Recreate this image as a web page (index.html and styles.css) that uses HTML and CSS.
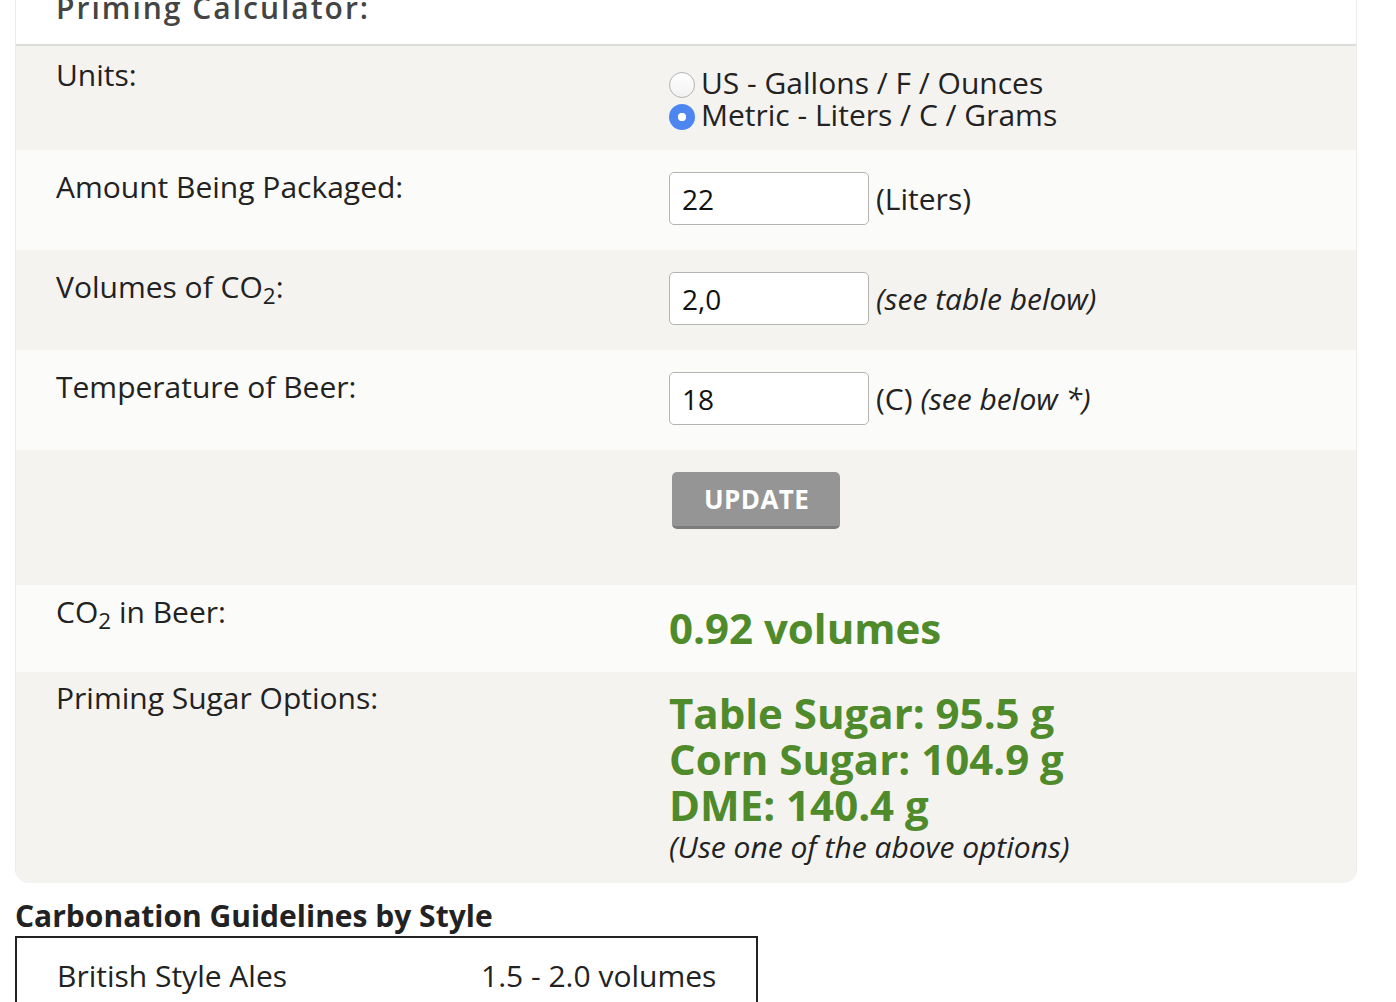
FILE: index.html
```html
<!DOCTYPE html>
<html lang="en">
<head>
    <meta charset="UTF-8">
    <meta name="viewport" content="width=device-width, initial-scale=1.0">
    <title>Priming Calculator</title>
    <link rel="stylesheet" href="styles.css">
</head>
<body>

    <div class="page">
        <div class="calc">
            <h2>Priming Calculator:</h2>

            <div class="row row-units">
                <div class="label">Units:</div>
                <div class="value">
                    <label class="radio"><input type="radio" name="units" value="us"> US - Gallons / F / Ounces</label>
                    <label class="radio"><input type="radio" name="units" value="metric" checked> Metric - Liters / C / Grams</label>
                </div>
            </div>

            <div class="row row-field alt">
                <div class="label">Amount Being Packaged:</div>
                <div class="value field">
                    <input type="text" id="amount" value="22">
                    <span>(Liters)</span>
                </div>
            </div>

            <div class="row row-field">
                <div class="label">Volumes of CO<sub>2</sub>:</div>
                <div class="value field">
                    <input type="text" id="volumes" value="2,0">
                    <span><em>(see table below)</em></span>
                </div>
            </div>

            <div class="row row-field alt">
                <div class="label">Temperature of Beer:</div>
                <div class="value field">
                    <input type="text" id="temp" value="18">
                    <span>(C) <em>(see below *)</em></span>
                </div>
            </div>

            <div class="row row-button">
                <div class="label"></div>
                <div class="value">
                    <button type="button">UPDATE</button>
                </div>
            </div>

            <div class="row row-result alt">
                <div class="label">CO<sub>2</sub> in Beer:</div>
                <div class="value result">0.92 volumes</div>
            </div>

            <div class="row row-sugar">
                <div class="label">Priming Sugar Options:</div>
                <div class="value">
                    <div class="result">Table Sugar: 95.5 g</div>
                    <div class="result">Corn Sugar: 104.9 g</div>
                    <div class="result">DME: 140.4 g</div>
                    <em class="note">(Use one of the above options)</em>
                </div>
            </div>
        </div>

        <h3>Carbonation Guidelines by Style</h3>
        <div class="guide">
            <div class="guide-row">
                <span>British Style Ales</span>
                <span>1.5 - 2.0 volumes</span>
            </div>
            <div class="guide-row">
                <span>Porter, Stout</span>
                <span>1.7 - 2.3 volumes</span>
            </div>
            <div class="guide-row">
                <span>Belgian Ales</span>
                <span>1.9 - 2.4 volumes</span>
            </div>
            <div class="guide-row">
                <span>American Ales and Lager</span>
                <span>2.2 - 2.7 volumes</span>
            </div>
        </div>
    </div>

</body>
</html>
```

FILE: styles.css
```css
body {
    margin: 0;
    font-family: "Open Sans", "Liberation Sans", sans-serif;
    font-size: 30px;
    line-height: 32px;
    color: #222;
    background-color: #fff;
}

.page {
    padding: 0 39px 0 15px;
}

.calc {
    margin-top: -24px;
    border-left: 1px solid #ececec;
    border-right: 1px solid #ececec;
    border-radius: 0 0 14px 14px;
    overflow: hidden;
}

h2 {
    margin: 0;
    padding: 12px 40px 16px;
    font-size: 30px;
    line-height: 40px;
    font-weight: 600;
    letter-spacing: 2px;
    color: #444;
    background-color: #fff;
    border-bottom: 2px solid #dcdcdc;
}

sub {
    font-size: 0.75em;
    line-height: 0;
    vertical-align: -0.25em;
}

.row {
    display: grid;
    grid-template-columns: 612px 1fr;
    padding: 0 40px 0 40px;
    background-color: #f4f3f0;
}

.row .value {
    margin-left: 1px;
}

.row.alt {
    background-color: #fbfbf9;
}

/* units */
.row-units {
    padding-top: 13px;
    padding-bottom: 19px;
}

.row-units .value {
    margin-top: 8px;
}

.radio {
    display: flex;
    align-items: center;
    gap: 6px;
    height: 32px;
}

.radio input {
    appearance: none;
    -webkit-appearance: none;
    width: 26px;
    height: 26px;
    margin: 4px 0 0;
    border: 1px solid #b3b3b3;
    border-radius: 50%;
    background: linear-gradient(#fff, #f2f2f2);
}

.radio input:checked {
    border: none;
    background: radial-gradient(circle, #fff 0 4px, #4d86f0 4.5px);
}

/* inputs */
.row-field {
    padding-top: 21px;
    padding-bottom: 25px;
}

.field {
    display: flex;
    align-items: center;
    gap: 7px;
    margin-top: 1px;
}

.field input {
    box-sizing: border-box;
    width: 200px;
    height: 53px;
    padding: 0 12px;
    font-family: inherit;
    font-size: 28px;
    color: #111;
    border: 1px solid #b4b4b4;
    border-radius: 5px;
    background-color: #fff;
}

/* update */
.row-button {
    padding-top: 22px;
    padding-bottom: 56px;
}

button {
    margin-left: 3px;
    padding: 12px 31px 12px 32px;
    font-family: inherit;
    font-size: 26px;
    line-height: 30px;
    font-weight: 700;
    letter-spacing: 0.4px;
    color: #fff;
    background-color: #959595;
    border: none;
    border-bottom: 3px solid #7c7c7c;
    border-radius: 5px;
    cursor: pointer;
}

button:hover {
    background-color: #888;
}

/* results */
.result {
    font-size: 42px;
    line-height: 46px;
    font-weight: 700;
    color: #4f8a2b;
}

.row-result {
    padding-top: 11px;
    padding-bottom: 21px;
}

.row-result .value {
    margin-top: 9px;
}

.row-sugar {
    padding-top: 10px;
    padding-bottom: 20px;
}

.row-sugar .value {
    margin-top: 8px;
}

.note {
    display: block;
    margin-top: 3px;
}

/* guidelines */
h3 {
    margin: 17px 0 4px;
    font-size: 30px;
    line-height: 32px;
    font-weight: 700;
    color: #222;
}

.guide {
    box-sizing: border-box;
    width: 743px;
    border: 2px solid #222;
}

.guide-row {
    display: grid;
    grid-template-columns: 424px 1fr;
    padding: 22px 40px;
    white-space: nowrap;
}
```
